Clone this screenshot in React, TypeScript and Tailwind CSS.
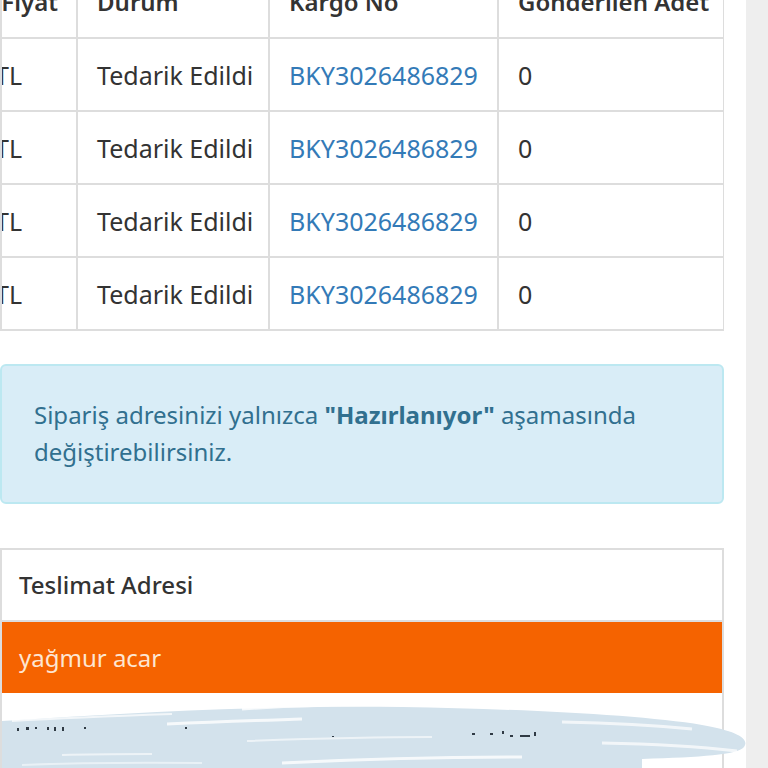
import React from 'react';

const rows = Array.from({ length: 4 }, () => ({
  price: '149,90 TL',
  status: 'Tedarik Edildi',
  cargo: 'BKY3026486829',
  sent: '0',
}));

const cell = 'border-2 border-[#dddddd] p-0 align-middle';

function Scribble() {
  return (
    <svg
      className="pointer-events-none absolute left-0 top-[6px] h-[80px] w-[750px]"
      viewBox="0 0 750 80"
      fill="none"
    >
      <path
        d="M0 22 C 120 14, 260 6, 400 8 C 520 10, 640 16, 700 26 C 735 32, 748 40, 742 48 C 735 56, 700 58, 640 60 L 640 80 L 0 80 Z"
        fill="#d3e2ec"
      />
      <path d="M240 10 C 300 6, 360 5, 410 6" stroke="#ffffff" strokeWidth="3" opacity="0.8" />
      <path d="M10 22 C 60 19, 110 17, 170 15" stroke="#ffffff" strokeWidth="2" opacity="0.7" />
      <path d="M165 25 C 230 22, 270 21, 300 20" stroke="#ffffff" strokeWidth="3" opacity="0.8" />
      <path d="M560 23 C 610 24, 650 26, 690 30" stroke="#ffffff" strokeWidth="3" opacity="0.7" />
      <path d="M245 42 C 300 40, 380 38, 430 38" stroke="#ffffff" strokeWidth="2" opacity="0.6" />
      <path d="M280 64 C 360 60, 440 58, 520 58" stroke="#ffffff" strokeWidth="3" opacity="0.8" />
      <path d="M600 44 C 650 45, 700 48, 735 52" stroke="#ffffff" strokeWidth="3" opacity="0.7" />
      <path d="M60 56 C 90 55, 120 55, 150 55" stroke="#ffffff" strokeWidth="2" opacity="0.6" />
      <path d="M20 66 C 70 64, 120 63, 200 64" stroke="#ffffff" strokeWidth="2" opacity="0.5" />
      <g fill="#2f3a44">
        <rect x="15" y="29" width="2" height="3" />
        <rect x="24" y="28" width="3" height="3" />
        <rect x="33" y="28" width="2" height="2" />
        <rect x="45" y="28" width="2" height="3" />
        <rect x="52" y="28" width="2" height="4" />
        <rect x="60" y="28" width="2" height="4" />
        <rect x="82" y="28" width="2" height="2" />
        <rect x="183" y="28" width="2" height="2" />
        <rect x="330" y="37" width="2" height="1" />
        <rect x="470" y="34" width="3" height="2" />
        <rect x="488" y="34" width="3" height="2" />
        <rect x="500" y="32" width="2" height="3" />
        <rect x="508" y="36" width="3" height="2" />
        <rect x="518" y="36" width="10" height="2" />
        <rect x="532" y="33" width="2" height="4" />
        <rect x="110" y="74" width="3" height="2" />
        <rect x="122" y="74" width="2" height="2" />
      </g>
    </svg>
  );
}

export default function App() {
  return (
    <div
      className="flex h-[768px] overflow-hidden bg-white text-[#333333]"
      style={{ fontFamily: '"Noto Sans", "Open Sans", sans-serif' }}
    >
      <main className="w-[746px] shrink-0 pr-[22px]">
        <div className="-mt-[36px] overflow-hidden border-l-2 border-[#dddddd]">
          <table className="w-[722px] table-fixed border-collapse text-[25px] leading-[36px]">
            <colgroup>
              <col className="w-[75px]" />
              <col className="w-[192px]" />
              <col className="w-[229px]" />
              <col className="w-[226px]" />
            </colgroup>
            <thead className="text-[24px]">
              <tr className="h-[73px]">
                <th className={`${cell} border-l-0 text-left font-semibold`}>
                  <div className="flex w-[74px] justify-end overflow-hidden whitespace-nowrap pr-[18px]">Fiyat</div>
                </th>
                <th className={`${cell} px-[19px] text-left font-semibold`}>Durum</th>
                <th className={`${cell} px-[19px] text-left font-semibold`}>Kargo No</th>
                <th className={`${cell} px-[19px] text-left font-semibold whitespace-nowrap`}>Gönderilen Adet</th>
              </tr>
            </thead>
            <tbody>
              {rows.map((r, i) => (
                <tr key={i} className="h-[73px]">
                  <td className={`${cell} border-l-0`}>
                    <div className="flex w-[74px] justify-end overflow-hidden whitespace-nowrap pr-[54px]">{r.price}</div>
                  </td>
                  <td className={`${cell} px-[19px] whitespace-nowrap`}>{r.status}</td>
                  <td className={`${cell} px-[19px]`}>
                    <a className="text-[#337ab7]">{r.cargo}</a>
                  </td>
                  <td className={`${cell} px-[19px]`}>{r.sent}</td>
                </tr>
              ))}
            </tbody>
          </table>
        </div>

        <div className="mt-[33px] h-[140px] rounded-[6px] border-2 border-[#bce8f1] bg-[#d9edf7] px-[32px] pt-[30px] text-[24px] leading-[37px] text-[#31708f]">
          Sipariş adresinizi yalnızca <b>"Hazırlanıyor"</b> aşamasında değiştirebilirsiniz.
        </div>

        <section className="mt-[44px] border-2 border-b-0 border-[#dddddd]">
          <div className="flex h-[72px] items-center border-b-2 border-[#dddddd] px-[17px] text-[24px] font-medium text-[#333333]">
            Teslimat Adresi
          </div>
          <div className="flex h-[71px] items-center bg-[#f56300] px-[17px] text-[24px] text-[#fde6d2]">
            yağmur acar
          </div>
          <div className="relative h-[120px]">
            <Scribble />
          </div>
        </section>
      </main>
      <aside className="flex-1 bg-[#eeeeee]" />
    </div>
  );
}
